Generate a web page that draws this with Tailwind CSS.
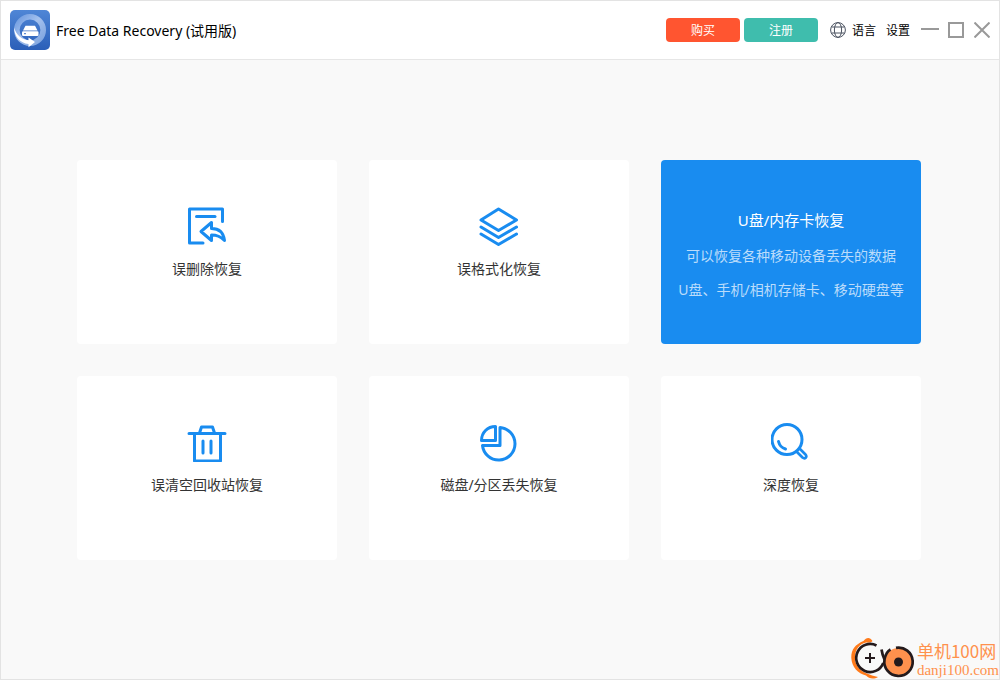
<!DOCTYPE html>
<html lang="zh-CN">
<head>
<meta charset="utf-8">
<meta name="viewport" content="width=device-width, initial-scale=1">
<title>Free Data Recovery</title>
<script src="https://cdn.jsdelivr.net/npm/@tailwindcss/browser@4"></script>
</head>
<body class="relative flex min-h-screen flex-col border border-[#e3e3e3] bg-[#f9f9f9] font-['Noto_Sans','Noto_Sans_CJK_SC',sans-serif] text-sm text-[#333333]">
<header class="flex h-[59px] shrink-0 items-center border-b border-[#e6e6e6] bg-white pr-[9px] pl-[9px]">
  <svg class="size-10 shrink-0" viewBox="0 0 40 40" aria-hidden="true">
    <defs><linearGradient id="lg" x1="0" y1="0" x2="0" y2="1"><stop offset="0" stop-color="#4f86d6"/><stop offset="1" stop-color="#2b5fb8"/></linearGradient>
    <linearGradient id="ring" x1="0" y1="0" x2="1" y2="1"><stop offset="0" stop-color="#6d9ae0"/><stop offset="0.45" stop-color="#a4c1ee"/><stop offset="1" stop-color="#7da3de"/></linearGradient></defs>
    <rect width="40" height="40" rx="5" fill="url(#lg)"/>
    <circle cx="20" cy="20" r="13.2" fill="none" stroke="url(#ring)" stroke-width="5.6"/>
    <path d="M4 17.5C4.500 27 10 33 18.500 34L18.500 37.200L25 32L18.500 27.500V30.200C11.500 29.500 6.500 25.500 4 17.500Z" fill="#fff"/>
    <path d="M15.500 15.800H25L27.500 20.500H13Z" fill="#fff"/>
    <rect x="12" y="21.300" width="16.500" height="4.700" rx="1.200" fill="#fff"/>
    <path d="M14 23.700H16" stroke="#3d72c8"/>
  </svg>
  <h1 class="ml-1.5 pt-0.5 text-sm text-black">Free Data Recovery (试用版)</h1>
  <div class="ml-auto flex items-center text-xs text-black">
    <button class="h-6 w-[74px] rounded bg-[#ff5530] pt-0.5 text-white">购买</button>
    <button class="ml-1 h-6 w-[74px] rounded bg-[#3fbdad] pt-0.5 text-white">注册</button>
    <button class="ml-3 flex items-center gap-1.5">
      <svg class="size-4" viewBox="0 0 16 16" fill="none" stroke="#4b5260" aria-hidden="true"><circle cx="8" cy="8" r="7.400"/><ellipse cx="8" cy="8" rx="3.600" ry="7.400"/><path d="M1.500 5H14.500M1.500 11H14.500"/></svg>
      <span class="pt-0.5">语言</span></button>
    <button class="ml-2.5 pt-0.5">设置</button>
    <button class="ml-[11px]" aria-label="最小化"><svg class="h-4 w-[18px]" viewBox="0 0 18 16" fill="none" stroke="#999" stroke-width="2"><path d="M0 7H18"/></svg></button>
    <button class="ml-[9px]" aria-label="最大化"><svg class="size-4" viewBox="0 0 16 16" fill="none" stroke="#999" stroke-width="2"><path d="M1 1H15V15H1Z"/></svg></button>
    <button class="ml-2.5" aria-label="关闭"><svg class="size-4" viewBox="0 0 16 16" fill="none" stroke="#999" stroke-width="2"><path d="M0.500 0.500L15.500 15.500M15.500 0.500L0.500 15.500"/></svg></button>
  </div>
</header>
<main class="grid flex-1 grid-cols-3 content-start gap-8 pt-[100px] pr-[78px] pb-8 pl-[76px]">
  <button class="flex h-46 flex-col items-center rounded-sm bg-white pt-[46px]">
    <svg class="size-10" viewBox="0 0 40 40" fill="none" stroke="#198cf0" stroke-width="3" aria-hidden="true"><path d="M16 37H2.500V3H35.500V15.500" stroke-linecap="round" stroke-linejoin="round"/><path d="M9.500 10.500H28" stroke-linecap="round"/><path d="M14 25.500L24.500 16.500V22.500C31.500 22.500 36.500 26.500 37.500 34.500C33 30 30 29 24.500 29V34.500Z" stroke-linejoin="round"/></svg>
    <span class="mt-[13px]">误删除恢复</span>
  </button>
  <button class="flex h-46 flex-col items-center rounded-sm bg-white pt-[46px]">
    <svg class="size-10" viewBox="0 0 40 40" fill="none" stroke="#198cf0" stroke-width="3" stroke-linecap="round" stroke-linejoin="round" aria-hidden="true"><path d="M19.500 3L37.500 14L19.500 24.500L2 14Z"/><path d="M2 21L19.500 31.500L37.500 21"/><path d="M2 28L19.500 38.500L37.500 28"/></svg>
    <span class="mt-[13px]">误格式化恢复</span>
  </button>
  <button class="flex h-46 flex-col items-center rounded bg-[#198cf0] pt-[50px] text-[#bbdcfb]">
    <span class="text-[15px] leading-5 text-white">U盘/内存卡恢复</span>
    <span class="mt-4 leading-5">可以恢复各种移动设备丢失的数据</span>
    <span class="mt-3.5 leading-5">U盘、手机/相机存储卡、移动硬盘等</span>
  </button>
  <button class="flex h-46 flex-col items-center rounded-sm bg-white pt-[46px]">
    <svg class="size-10" viewBox="0 0 40 40" fill="none" stroke="#198cf0" stroke-width="3" stroke-linecap="round" stroke-linejoin="round" aria-hidden="true"><path d="M2 11.500H38M12.500 11L14.500 5H25.500L27.500 11"/><path d="M7.500 11.500V39H33.500V11.500"/><path d="M16 19V31M24 19V31"/></svg>
    <span class="mt-[13px]">误清空回收站恢复</span>
  </button>
  <button class="flex h-46 flex-col items-center rounded-sm bg-white pt-[46px]">
    <svg class="size-10" viewBox="0 0 40 40" fill="none" stroke="#198cf0" stroke-width="3" stroke-linejoin="round" aria-hidden="true"><path d="M16.500 4.500V18.500H2.500C2.500 10.500 8.500 4.500 16.500 4.500Z"/><path d="M21 5.500A16.300 16.300 0 1 1 3.500 23.500H21Z"/></svg>
    <span class="mt-[13px]">磁盘/分区丢失恢复</span>
  </button>
  <button class="flex h-46 flex-col items-center rounded-sm bg-white pt-[46px]">
    <svg class="size-10" viewBox="0 0 40 40" fill="none" stroke="#198cf0" stroke-width="3" stroke-linecap="round" stroke-linejoin="round" aria-hidden="true"><circle cx="16" cy="17.500" r="15"/><path d="M7.500 19.500C8.500 23.500 11 26 14.500 27"/><path d="M26 30L31.500 35.500C34 37.500 36.500 35 34.500 32.500L29 27" stroke-width="2.700"/></svg>
    <span class="mt-[13px]">深度恢复</span>
  </button>
</main>
<aside class="absolute right-0 bottom-0 flex items-end gap-0.5">
  <svg class="h-[42px] w-16" viewBox="0 0 64 42" fill="none" aria-hidden="true">
    <path d="M21.500 4C19 0 15.500 0 12.500 4C4 7.500 0 13 0.300 21C0.800 30 7 36.500 15 38.500C18 42 23 42.500 27 40C17 37.500 4.500 34 4 21C4 12 8.500 7 15 5.500C18 5.500 20 6 21.500 4Z" fill="#ff7a1a"/>
    <path d="M25.500 8.500A14 14 0 1 0 32.300 26" stroke="#241a1c" stroke-width="2.700"/>
    <path d="M19 16V26M14 21H24" stroke="#241a1c" stroke-width="2"/>
    <circle cx="47.500" cy="25" r="14" fill="#ff914d"/>
    <path d="M45 10.800A14.200 14.200 0 1 1 33.500 22.500C34.500 17.500 36.500 14 39.500 12.500" stroke="#241a1c" stroke-width="2.700"/>
    <path d="M30.500 12.500C31 16 32 19 33.500 22.500" stroke="#241a1c" stroke-width="2.700"/>
    <circle cx="47.500" cy="25" r="4.500" fill="#241a1c"/>
  </svg>
  <div class="text-[#ff914d]">
    <p class="font-['Noto_Sans_CJK_SC',sans-serif] text-[17px] leading-5">单机100网</p>
    <p class="font-['Liberation_Serif',serif] text-[15px] leading-[18px]">danji100.com</p>
  </div>
</aside>
</body>
</html>
